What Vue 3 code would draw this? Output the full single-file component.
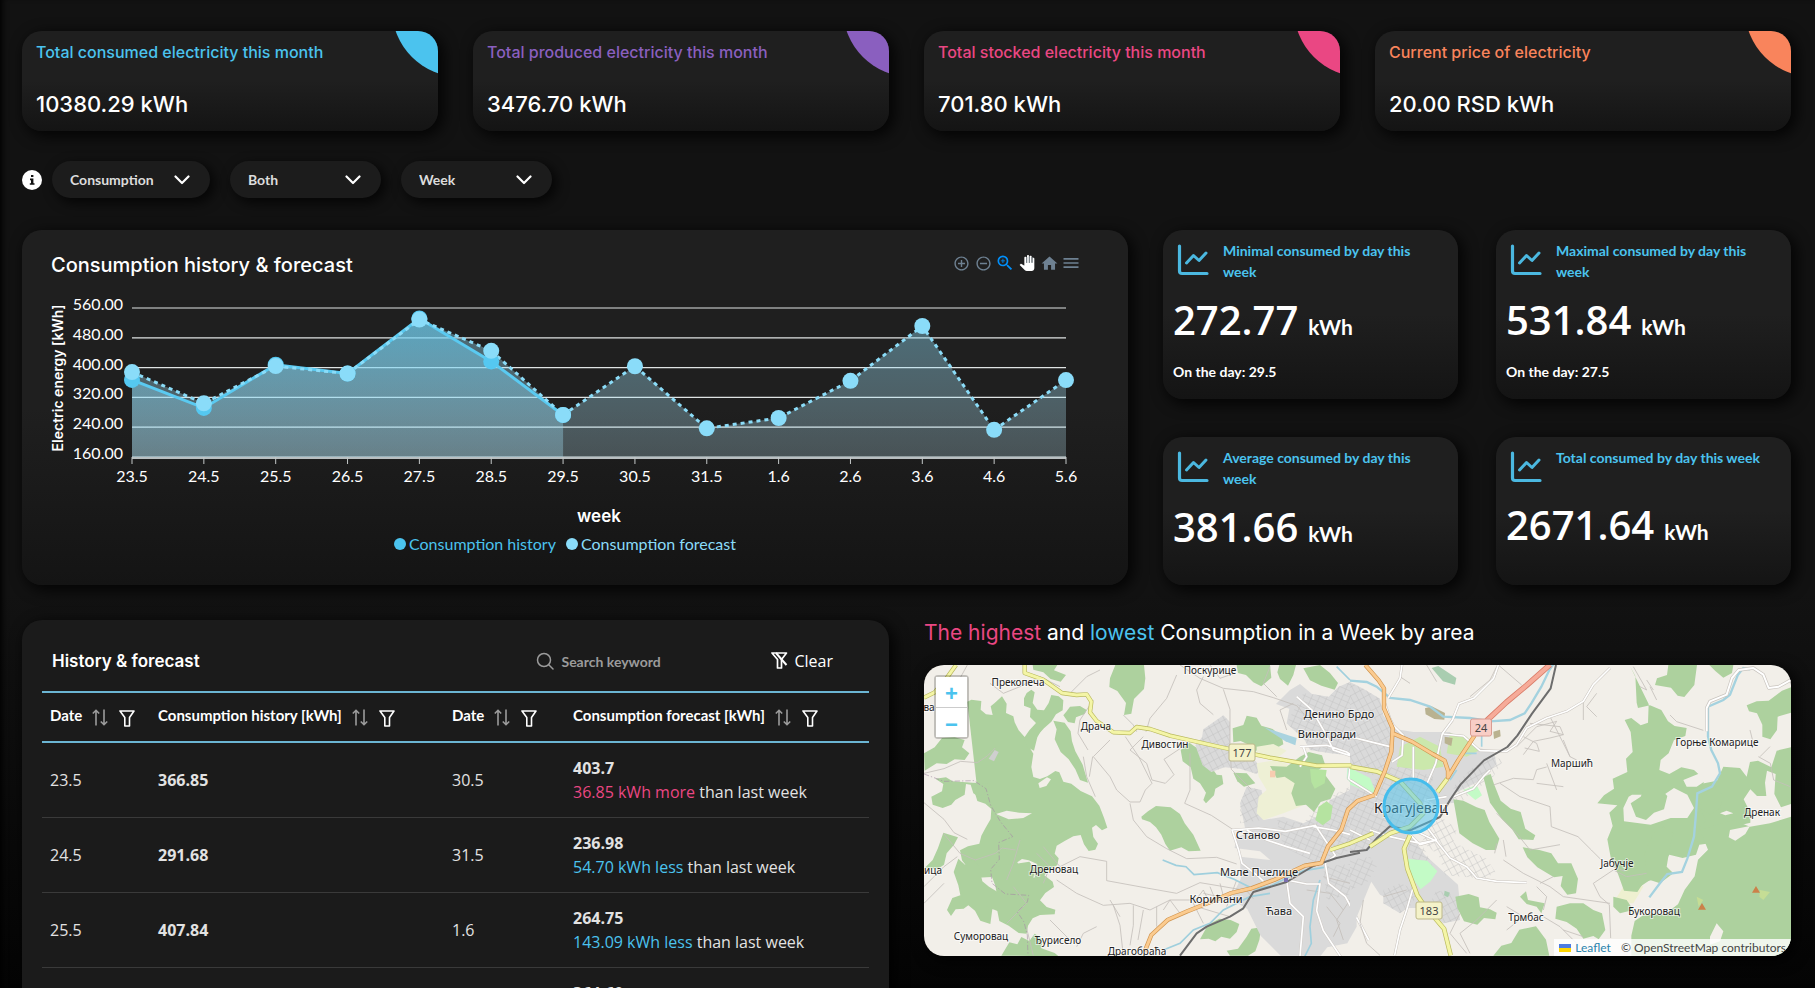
<script setup>
import { ref, computed } from 'vue'

const totals = [
  { label: 'Total consumed electricity this month', value: '10380.29 kWh', tone: 'blue' },
  { label: 'Total produced electricity this month', value: '3476.70 kWh', tone: 'purple' },
  { label: 'Total stocked electricity this month', value: '701.80 kWh', tone: 'pink' },
  { label: 'Current price of electricity', value: '20.00 RSD kWh', tone: 'orange' }
]

const filters = [
  { id: 'kind', label: 'Energy kind', options: ['Consumption', 'Production'], wide: true },
  { id: 'series', label: 'Series', options: ['Both', 'History', 'Forecast'] },
  { id: 'period', label: 'Period', options: ['Week', 'Month', 'Year'] }
]

const stats = [
  { label: 'Minimal consumed by day this week', value: '272.77', day: '29.5' },
  { label: 'Maximal consumed by day this week', value: '531.84', day: '27.5' },
  { label: 'Average consumed by day this week', value: '381.66' },
  { label: 'Total consumed by day this week', value: '2671.64' }
]

/* chart */
const days = ['23.5', '24.5', '25.5', '26.5', '27.5', '28.5', '29.5', '30.5', '31.5', '1.6', '2.6', '3.6', '4.6', '5.6']
const history = [366.85, 291.68, 407.84, 384, 531.84, 416.66, 272.77]
const forecast = [388, 304, 404, 384, 529, 445, 273, 403.7, 236.98, 264.75, 364.6, 511.6, 233, 366.4]
const ticks = [560, 480, 400, 320, 240, 160]
const left = 110
const right = 1044
const bottom = 167
const px = (i) => left + (i * (right - left)) / 13
const py = (v) => bottom - ((v - 160) * 149) / 400
const toPoints = (list) => list.map((v, i) => ({ x: px(i), y: py(v) }))
const historyPts = computed(() => toPoints(history))
const forecastPts = computed(() => toPoints(forecast))
const line = (pts) => pts.map((p) => `${p.x},${p.y}`).join(' ')
const area = (pts) => `${pts[0].x},${bottom} ${line(pts)} ${pts[pts.length - 1].x},${bottom}`

/* table */
const keyword = ref('')
const columns = ['Date', 'Consumption history [kWh]', 'Date', 'Consumption forecast [kWh]']
const rows = [
  { d1: '23.5', h: '366.85', d2: '30.5', f: '403.7', diff: '36.85 kWh more', up: true },
  { d1: '24.5', h: '291.68', d2: '31.5', f: '236.98', diff: '54.70 kWh less' },
  { d1: '25.5', h: '407.84', d2: '1.6', f: '264.75', diff: '143.09 kWh less' },
  { d1: '26.5', h: '384.00', d2: '2.6', f: '364.60', diff: '19.40 kWh less' }
]
const shown = computed(() => rows.filter((r) => Object.values(r).join(' ').includes(keyword.value)))

/* map */
const places = [
  { n: 'Прекопеча', x: 94, y: 21 },
  { n: 'Поскурице', x: 286, y: 9 },
  { n: 'ва', x: 5, y: 46 },
  { n: 'Драча', x: 172, y: 65 },
  { n: 'Дивостин', x: 241, y: 83 },
  { n: 'Денино Брдо', x: 415, y: 53, s: 11 },
  { n: 'Виногради', x: 403, y: 73, s: 11 },
  { n: 'Станово', x: 334, y: 174, s: 11 },
  { n: 'Мале Пчелице', x: 335, y: 211, s: 11 },
  { n: 'Корићани', x: 292, y: 238, s: 11 },
  { n: 'Ћава', x: 355, y: 250, s: 11 },
  { n: 'Дреновац', x: 130, y: 208 },
  { n: 'ица', x: 9, y: 209 },
  { n: 'Суморовац', x: 57, y: 275 },
  { n: 'Ђурисело', x: 134, y: 279 },
  { n: 'Драгобраћа', x: 213, y: 290 },
  { n: 'Маршић', x: 648, y: 102 },
  { n: 'Горње Комарице', x: 793, y: 81 },
  { n: 'Дренак', x: 838, y: 151 },
  { n: 'Јабучје', x: 693, y: 202 },
  { n: 'Трмбас', x: 602, y: 256 },
  { n: 'Букоровац', x: 730, y: 250 },
  { n: 'Крагујевац', x: 487, y: 148, s: 14 }
]
const shields = [
  { n: '177', x: 318, y: 79, w: 26, kind: 'secondary' },
  { n: '24', x: 557, y: 54, w: 21, kind: 'trunk' },
  { n: '183', x: 505, y: 237, w: 26, kind: 'secondary' }
]
</script>

<template>
  <main class="page">
    <section class="totals">
      <article v-for="t in totals" :key="t.label" class="card total" :class="t.tone">
        <h2>{{ t.label }}</h2>
        <p>{{ t.value }}</p>
      </article>
    </section>

    <section class="filters">
      <button class="info" type="button" aria-label="Information">
        <svg viewBox="0 0 20 20" width="20" height="20">
          <circle cx="10" cy="10" r="10" fill="#fff" />
          <path d="M9 5h2.400v2H9zM8 8.600h3.400v4.600h1.100v1.600H7.800v-1.600H9v-3H8z" fill="#111" />
        </svg>
      </button>
      <div v-for="f in filters" :key="f.id" class="pick" :class="{ wide: f.wide }">
        <select :id="f.id" :aria-label="f.label">
          <option v-for="o in f.options" :key="o">{{ o }}</option>
        </select>
        <svg viewBox="0 0 16 10" width="16" height="10">
          <path d="M1.500 1.500 8 8l6.500-6.500" fill="none" stroke="#fff" stroke-width="2.200" stroke-linecap="round" stroke-linejoin="round" />
        </svg>
      </div>
    </section>

    <section class="middle">
      <article class="card chart">
        <header>
          <h2>Consumption history &amp; forecast</h2>
          <div class="tools">
            <button type="button" aria-label="Zoom in">
              <svg viewBox="0 0 24 24" width="17" height="17" fill="#6e8192"><path d="M13 7h-2v4H7v2h4v4h2v-4h4v-2h-4V7zm-1-5C6.480 2 2 6.480 2 12s4.480 10 10 10 10-4.480 10-10S17.520 2 12 2zm0 18c-4.410 0-8-3.590-8-8s3.590-8 8-8 8 3.590 8 8-3.590 8-8 8z" /></svg>
            </button>
            <button type="button" aria-label="Zoom out">
              <svg viewBox="0 0 24 24" width="17" height="17" fill="#6e8192"><path d="M7 11v2h10v-2H7zm5-9C6.480 2 2 6.480 2 12s4.480 10 10 10 10-4.480 10-10S17.520 2 12 2zm0 18c-4.410 0-8-3.590-8-8s3.590-8 8-8 8 3.590 8 8-3.590 8-8 8z" /></svg>
            </button>
            <button type="button" aria-label="Selection zoom">
              <svg viewBox="0 0 24 24" width="20" height="20" fill="#008ffb"><path d="M15.500 14h-.79l-.28-.27A6.470 6.470 0 0 0 16 9.500 6.500 6.500 0 1 0 9.500 16c1.610 0 3.090-.59 4.230-1.570l.27.28v.79l5 4.990L20.490 19l-4.990-5zm-6 0C7.010 14 5 11.990 5 9.500S7.010 5 9.500 5 14 7.010 14 9.500 11.990 14 9.500 14z" /><path d="M12 10h-2v2H9v-2H7V9h2V7h1v2h2v1z" /></svg>
            </button>
            <button type="button" aria-label="Pan">
              <svg viewBox="0 0 24 24" width="16" height="16">
                <path d="M23 5.500V20c0 2.200-1.800 4-4 4h-7.300c-1.080 0-2.100-.43-2.850-1.190L1 14.830s1.260-1.230 1.300-1.250c.22-.19.49-.29.79-.29.22 0 .42.060.6.160.040.010 4.310 2.460 4.310 2.460V4c0-.83.67-1.500 1.500-1.500S11 3.170 11 4v7h1V1.500c0-.83.67-1.500 1.500-1.500S15 .67 15 1.500V11h1V2.500c0-.83.67-1.500 1.500-1.500s1.500.67 1.500 1.500V11h1V5.500c0-.83.67-1.500 1.500-1.500s1.500.67 1.500 1.500z" fill="#fff" />
                <path d="M11.500 3v9M15.500 2v10M19.500 3v9" stroke="#7d868c" stroke-width="1.800" />
              </svg>
            </button>
            <button type="button" aria-label="Reset zoom">
              <svg viewBox="0 0 24 24" width="19" height="19" fill="#6e8192"><path d="M10 20v-6h4v6h5v-8h3L12 3 2 12h3v8z" /></svg>
            </button>
            <button type="button" aria-label="Menu">
              <svg viewBox="0 0 24 24" width="20" height="20" fill="#6e8192"><path d="M3 18h18v-2H3v2zm0-5h18v-2H3v2zm0-7v2h18V6H3z" /></svg>
            </button>
          </div>
        </header>
        <svg class="plot" viewBox="0 0 1106 275" role="img" aria-label="Consumption history and forecast by day">
          <defs>
            <linearGradient id="fillHistory" x1="0" y1="0" x2="0" y2="1">
              <stop offset="0" stop-color="#4bc6f2" stop-opacity=".56" />
              <stop offset="1" stop-color="#a0dcf2" stop-opacity=".32" />
            </linearGradient>
            <linearGradient id="fillForecast" x1="0" y1="0" x2="0" y2="1">
              <stop offset="0" stop-color="#8bdcf8" stop-opacity=".42" />
              <stop offset="1" stop-color="#c5edfa" stop-opacity=".26" />
            </linearGradient>
          </defs>
          <g>
            <line v-for="t in ticks" :key="t" :x1="left" :x2="right" :y1="py(t)" :y2="py(t)" stroke="#dfe3e3" stroke-width="1.200" />
            <text v-for="t in ticks" :key="'t' + t" x="101" :y="py(t) + 2" text-anchor="end" class="axis">{{ t.toFixed(2) }}</text>
          </g>
          <polygon :points="area(historyPts)" fill="url(#fillHistory)" />
          <polygon :points="area(forecastPts)" fill="url(#fillForecast)" />
          <polyline :points="line(historyPts)" fill="none" stroke="#5acaf1" stroke-width="3" />
          <polyline :points="line(forecastPts)" fill="none" stroke="#8bdcf8" stroke-width="3" stroke-dasharray="4 4" />
          <line :x1="left" :x2="right" :y1="bottom + 1" :y2="bottom + 1" stroke="#b9bfc1" stroke-width="2" />
          <g v-for="(d, i) in days" :key="d">
            <line :x1="px(i)" :x2="px(i)" :y1="bottom" :y2="bottom + 7" stroke="#c4c8c8" />
            <text :x="px(i)" y="192" text-anchor="middle" class="axis">{{ d }}</text>
          </g>
          <circle v-for="(p, i) in historyPts" :key="'h' + i" :cx="p.x" :cy="p.y" r="8" fill="#55c8f1" />
          <circle v-for="(p, i) in forecastPts" :key="'f' + i" :cx="p.x" :cy="p.y" r="8" fill="#8adcf9" />
          <text x="-88" y="41" transform="rotate(-90)" text-anchor="middle" class="ytitle">Electric energy [kWh]</text>
          <text x="577" y="232" text-anchor="middle" class="xtitle">week</text>
          <circle cx="378" cy="254" r="6" fill="#4bc3ee" />
          <text x="387" y="260" class="axis" fill="#4bc3ee">Consumption history</text>
          <circle cx="550" cy="254" r="6" fill="#8adcf9" />
          <text x="559" y="260" class="axis" fill="#8adcf9">Consumption forecast</text>
        </svg>
      </article>

      <div class="stats">
        <article v-for="s in stats" :key="s.label" class="card stat">
          <header>
            <svg viewBox="0 0 40 40" width="40" height="40" fill="none" stroke="#4bb8e0" stroke-linecap="round" stroke-linejoin="round">
              <path d="M6.500 6v25q0 2.500 2.500 2.500h25" stroke-width="3.200" />
              <path d="M13.500 23l7-7.500 5.500 5 7-7.500" stroke-width="3" />
            </svg>
            <h3>{{ s.label }}</h3>
          </header>
          <p class="figure"><strong>{{ s.value }}</strong><span>kWh</span></p>
          <p v-if="s.day" class="day">On the day: {{ s.day }}</p>
        </article>
      </div>
    </section>

    <section class="lower">
      <article class="card listing">
        <header>
          <h2>History &amp; forecast</h2>
          <label class="search" for="keyword">
            <svg viewBox="0 0 18 18" width="18" height="18" fill="none" stroke="#9b9b9b" stroke-width="1.500" stroke-linecap="round"><circle cx="8" cy="8" r="6.500" /><path d="M13 13l4 4" /></svg>
            <input id="keyword" v-model="keyword" type="text" placeholder="Search keyword" aria-label="Search keyword" />
          </label>
          <button type="button" class="clear" @click="keyword = ''">
            <svg viewBox="0 0 17 17" width="17" height="17" fill="none" stroke="#fff" stroke-width="1.700" stroke-linejoin="round"><path d="M1 1h14.500l-5 6.500V16H6.500V7.500z" /><path d="M5 1l10.500 12" stroke-width="2" /></svg>
            Clear
          </button>
        </header>
        <table>
          <thead>
            <tr>
              <th v-for="(c, i) in columns" :key="i" scope="col">
                <div>
                  <span>{{ c }}</span>
                  <button type="button" :aria-label="'Sort by ' + c">
                    <svg viewBox="0 0 16 17" width="16" height="17" fill="none" stroke="#9c9c9c" stroke-width="1.600"><path d="M4 16.500V1.500M.8 4.500 4 1.300l3.200 3.200M12 .5v15M8.800 12.500l3.200 3.200 3.200-3.200" /></svg>
                  </button>
                  <button type="button" class="funnel" :aria-label="'Filter ' + c">
                    <svg viewBox="0 0 16 17" width="16" height="17" fill="none" stroke="#fff" stroke-width="1.600" stroke-linejoin="round"><path d="M1 1h14l-4.500 6.500V16H5.800V7.500z" /></svg>
                  </button>
                </div>
              </th>
            </tr>
          </thead>
          <tbody>
            <tr v-for="r in shown" :key="r.d1">
              <td>{{ r.d1 }}</td>
              <td><b>{{ r.h }}</b></td>
              <td>{{ r.d2 }}</td>
              <td>
                <b>{{ r.f }}</b><br />
                <span :class="r.up ? 'more' : 'less'">{{ r.diff }}</span> than last week
              </td>
            </tr>
          </tbody>
        </table>
      </article>

      <article class="area">
        <h2><span class="more">The highest</span> and <span class="less">lowest</span> Consumption in a Week by area</h2>
        <div class="map">
          <svg class="tiles" viewBox="0 0 867 291" preserveAspectRatio="xMidYMid slice" role="img" aria-label="Map of Kragujevac">
            <defs>
              <pattern id="streets" width="21" height="17" patternUnits="userSpaceOnUse" patternTransform="rotate(24)">
                <path d="M0 .5h21M.5 0v17" stroke="#c2c2c2" stroke-width="2" fill="none" />
              </pattern>
              <pattern id="blocks" width="17" height="23" patternUnits="userSpaceOnUse" patternTransform="rotate(-28)">
                <path d="M0 .5h17M.5 0v23" stroke="#c2c2c2" stroke-width="2" fill="none" />
              </pattern>
            </defs>
            <rect width="867" height="291" fill="#f2efe9" />

            <g transform="translate(-14 -65) scale(.33333)">
              <g fill="#add19e">
                <path d="M172 305l12-6 30 4-2 26 16 14 20 2-6-26 12-10 22-20 14 22-2 28 22 10 4 18 12 24 18 20 14-20 20-22-18-18 2-26-20-8v-22l8-16 14-10 10 8-6 32 14 20 20 2 14-22 8-24 22 4 14 12-2 30-20 12-14 22-22 20-22 24-14 10-8 22 12 20-6 40 6 30 20 6 22-8 24-16 12 4 12 28 24 6 28 22 34 16 22 28 14 36 10 30-16 8-18-16-12 8 4 28 14 20-8 18-20 4-14-20-10-28-22 4-26 14-24 14-6 24 12 14-4 20-30 20-16 20-12 16-10-24 6-36-24-10-20-4-14 10 12 26-4 26-14 8-22-10-14-36-22 6-14 24-40 2-26-24-22-28-6-30 24-12 34-8 6-24 12-22 16-28 2-30-18-16-24-8-8-26 6-24z" />
                <path d="M342 420l50-62 20 2-30 52-10 40-20-10zM430 362l34 6 18 26 4 30 10 30 22 40 10 34 6 20-24-8-14-32-20-30-24-22-18-38 6-30z" />
                <path d="M480 320l30-2 20 12-6 12-26 10-4 18-20-4-14-20 10-12z" />
                <path d="M42 460l32-18 22-28 38-2 30 8-8 22 22 18-14 20-30-2-24 14-30-2-36 22z" />
                <path d="M64 590l32-16 4-22-24-16 32-4 20 12 60 4 50 2-4 22-28 18-16-10-8-26-14-2-4 32-28 16-12 14-26 10-30-10z" />
                <path d="M100 698l44 14-12 22-22 26-8 34-20 14-38-4 24-24 16-36z" />
                <path d="M145 776l20 18 24-16 16 16 12 50 20 16 30 18 12 40-10 8-22 2-6 44-30-10-16-30-20-16-14 10-24 2-14 20-12-18 16-36 24-8-6-30-14-40z" />
                <path d="M240 815l34-20 44-4 40-6 18 22-6 26 32-8 26 20 4 16-26 18-16 22 20 20 26 8-2 14-44 2-22 10-14 22-4 24-24-2-30-22-28-14-6-30-34-14 6-26 26-14-4-22z" />
                <path d="M274 1067l24-40 24 6 12-22 24 12 16-22 24 16-4 28 40 14 12 10z" />
                <path d="M368 195h74l-10 16 36 14-16 20-30-8-22-20-30-8z" />
                <path d="M616 195h86l4 40-4 32-30 30-8 44-22 4 6-36-26-36-24-12 2-26z" />
                <path d="M980 195h100l4 38-30 26-24-12-22-22-24-6zM1108 195h50l-8 30-16 32-24-20-8-20zM1180 205l50-10 30 24 24 30-10 20-40-12-34-16z" />
                <path d="M968 385l32-10 10-28 30 6 14 24 34 10 28 24 4 22-26 14-24-8-24 6-16 18-12-28-26-12-22 4z" />
                <path d="M812 450l26-22 28 20 22 22-2 24 20 10 14 20 16 2 4 26-24 14-4 20-24 24-8-10 8-22-18-28-20-14-8-34-24-18z" />
                <path d="M970 518l40 2 26 30-34 10-20-16z" />
                <path d="M694 650l20-16 24-16 44 4 28 20 14 28 26 34 22 48-36 2-22-12-34 10-14-20-12-28-16-22-18-16-24-8z" />
                <path d="M870 1018l24-44 34-18 34 4 26 12-8 24-20 20-26-6-18 14-20-8zM950 1052l34-6 26-36 14-24 30-4-6 38-12 34-22 13h-54zM1064 976l26-22 18 22-6 20-22 8-18-12z" />
              </g>
              <path d="M258 642l32-10 38 6 38 2-26 14-44 4zM385 550l26-18 12 6-14 20-20 6z" fill="#f2efe9" />
              <path d="M236 476l18-26 12 6-14 28z" fill="#cfcfcf" />
              <g fill="#dadada">
                <path d="M880 388l60-42 20 20v80l30 20 46 16 20 26-16 14-50-16-46-4-40 14-26-20-22-60 20-24z" />
                <path d="M1140 270l30-18 36 30 50 8 30-30 34-14v220l-60-6-60-10-16-30-54-50 8-44-40-14z" />
                <path d="M990 610l20-50 44 10 10 40-4 50 60-10 60 20 60-30 20-40 60-30v220l-40 20-60 20-100-16-70-60-76-10 4-26 30-20z" />
                <path d="M990 770l90 10 80 30 60-20 120-10v200l-28 50 -60 12-20 25h-120l-60-60-40-80-50-30 30-60z" />
              </g>
              <path d="M880 388l60-42 20 20v80l30 20 46 16 20 26-16 14-50-16-46-4-40 14-26-20-22-60 20-24zM990 610l20-50 44 10 10 40-4 50-70 10z" fill="url(#blocks)" />
              <path d="M1180 280l26 2 50 8 30-30 34-14v220l-60-6-60-10-16-30-54-50zM1100 660l80 10 40-50 60-40 40-20v190l-40 20-60 20-100-50zM1240 800l100-10v90l-90 20z" fill="url(#streets)" />
              <path d="M1040 490l60-10 50 20 40 60 20 40-40 20-50 20-60 20-20-20 6-50 24-20-24-40zM1040 440l50-8 40 20-40 30-50-14z" fill="#eef0d5" />
              <path d="M1080 498l50 2 40-30 26-14 40 10 10 30-30 20 30 10 30 40-14 30-30 10-20 30-24-22-30 4-14-38 10-30-30-20-24 4z" fill="#add19e" />
              <path d="M1216 660l10-40 24-16 18 14-6 40-24 18zM1200 506l50 4-6 40-30 16-10-20z" fill="#b5e3a0" />
              <path d="M1312 504l28 8v54l-30-30z" fill="#c3f5d2" />
              <path d="M1080 512h16v20h-16z" fill="#f7ccb0" />
              <path d="M1062 382l98 32-4 22-30-12z" fill="#aad3df" />
              <g fill="none" stroke="#c4bfba" stroke-width="2.500">
                <path d="M172 195l-22 40-50 40M42 520l60-14 50-22 50 4 30-20 24-24M42 608l60 50 30 40 40 20M100 700l50 60 46 20 60-20 20-16 40 6M42 860l60-60 40-30M42 910l60-60" />
                <path d="M810 195l60 40 70 30 90 10 60 18 70 24 40 46M880 230l-20 40 10 40 40 34M940 268l20 60 0 120 4 60 60 60M800 225l-30 70-50 60-12 40M640 345l30 30 10 20M600 420l-50 50 50 60 20 40 40 36h30l16-36 20-20-40-80-40-60M550 300l-40 60-6 40 30 50M520 470l10 60 26 60M548 470l-10 60M700 410l-40 40 50 40 16 50 40 10 26-26-30-46 60-40M840 460v110l-16 40 80 36 70 46M660 610l10 50 40 50 60 36 60 30 90-4 60 20" />
                <path d="M400 740l50 60 60-30 80 14v58l120 22 90 16 70-32 60 10 80 14 20 24M440 840l60 40 80 36 80-6 60 20 60-30 80 0M610 916l20 60 10 92M670 916v60l-10 60M700 930l-16 90M740 920v60M380 760l40 40-20 50M330 720l-20 70-20 50M310 860l40 50-60 60M350 985l20 82M420 960l60 60M500 1040l20-40 40-20M880 970l-30-60 30-40 20 40M600 900l30 50M760 930l20-30 30 40M480 280l50-50 40-20M450 260l-60-30-60 30-50 20-40-30" />
                <path d="M900 860l20 50M930 850l16 60M880 880l90 20M860 920l100 30M980 840l-30 80M900 195l30 40 40-14M1100 290l-40-40 20-50M1130 390l-20-60 40-20M1250 920l40 50-20 40M1320 900l-40 60 20 60M1190 870l70 10 40 50M1240 830l80 20" />
              </g>
              <path d="M42 522l60 22 90-2 36 24 14 50 30 50 36 44-42 18 2 50-26 30 4 42 40 32 70 4-4 20-30 30 20 30 10 40 2 60" fill="none" stroke="#a58ba5" stroke-width="3" stroke-dasharray="16 6 4 6" opacity=".6" />
              <path d="M758 780l40 16 30 4 24 24 70-6 50 20 60 30 50-10 60-30 40-16 60-10M760 1050l50-20 40-40 50-20 40-40 80-40 60-10M1230 840l-20 60-10 80 4 50-20 40M1280 200l40 40" fill="none" stroke="#9fcfdd" stroke-width="5" />
              <path d="M1160 290l46 40 40 70 24 50 60 20M1180 440l10 30-20 30M1170 440l80-4 60 20 40 26-30 24-4 30 40 26M966 690l80-6 80 10 90-18 60 90-30 24 10 60 50 40 70 130M966 690l20 60 10 40 50 40 20 20M1130 840l10 70 40 40-10 118M1130 840l60 12h40l-10 80 20 60 60 90M1210 680l60 10 60 16M1200 760l-70-20-60-20-60-30" fill="none" stroke="#cfcac5" stroke-width="8" />
              <path d="M1160 290l46 40 40 70 24 50 60 20M1180 440l10 30-20 30M1170 440l80-4 60 20 40 26-30 24-4 30 40 26M966 690l80-6 80 10 90-18 60 90-30 24 10 60 50 40 70 130M966 690l20 60 10 40 50 40 20 20M1130 840l10 70 40 40-10 118M1130 840l60 12h40l-10 80 20 60 60 90M1210 680l60 10 60 16M1200 760l-70-20-60-20-60-30" fill="none" stroke="#fff" stroke-width="5" />
            </g>

            <g transform="translate(426 -65) scale(.33333)">
              <g fill="#dadada">
                <path d="M0 246l40 20 50 30 10 50 30 40 60 10 110 0 40 40 90 16 10 40-50 50-80 40 4 26-60 6-30-20-10 50-30 60 40 60 100 90 6 60-60 10-100 0-80-40-40-60-20-20H0z" />
                <path d="M100 870l50-20 50 20-10 40-40 30-50-30zM260 870l60 20 10 70-50 10-50-40z" />
                <path d="M0 660l70-10 60 20 30 40-20 60-30 40-40 20L0 1000z" />
              </g>
              <path d="M0 246l40 20 50 30 10 50 30 40 0 100-60 40-70-20zM310 560l60-60 60-30 30 10-30 50-80 60-30 30zM240 670l40-14 40 30-10 40 100 50 26 40-30 20-120-10-20-60-50-40zM100 870l50-20 50 20-10 40-40 30-50-30zM260 870l60 20 10 70-50 10-50-40z" fill="url(#blocks)" />
              <path d="M0 580l60-30 80-60 110 40-10 100 -40 30-60 20-60 20-20 40-60 20zM160 720l60 20 30 60-30 40M0 780l60-10 20 30-30 50-50 20z" fill="url(#streets)" />
              <path d="M150 440l60-30 60 30 10 60-60 10-80-10zM300 400l50 10 40 40-40 20-60-10z" fill="#cbe8ac" />
              <path d="M0 504l60 30 20 50-80-30zM340 570l40-14 16 30-20 14zM172 776l60 6 30 32-20 30-30 24-30-40z" fill="#c3fbc6" />
              <path d="M225 325l20-6 40 20-2 20-30-2-26-14zM284 410l24 4-4 24-20-8zM430 395l20-6 2 20-20 8z" fill="#b9b290" />
              <path d="M245 204l20-6 54 36-4 20-36-10zM284 872l16 6-6 14-12-6z" fill="#a9cdb0" />
              <path d="M820 860l40-20 20 20-30 50-60-2zM940 670l60-20 30 30-60 20z" fill="#eef0d0" />
              <g fill="#add19e">
                <path d="M840 198l16 30 4 80 4 16 36-8 34 14 20 34 20 14 36 6-4 24-34 12-16 40-24 20-4 30 30 12 36-20 38 8 30 28-4 34 40-4 34 14-28 30-14 34 20 60-30 24-32 4-10 30-40 10-40-10-20 30-10 40-46 12-20 30-40-4-18-50-22-50-10-54 16-40-10-40 24-22-60-6 20-24 30-20-4-30 44-20-4-40 20-20-6-60-18-36 20-6 28 22 22-8 2-56z" />
                <path d="M955 195h86l-8 60-30 36-20-4-20-24-48-8 6-20 30-10z" />
                <path d="M1078 195h72l-4 24-26 14-24-20z" />
                <path d="M1190 316l30-12 36-2 40-30 27-10v76l-40 12-2 40-20 28-24-8 0-36-16-34-24-6z" />
                <path d="M1120 500l50 4 20 26 10-44 24-4 40 20 16-50 43-10v170l-30 10-20-40 4-60-26-10-6 36 4 40-28 0-20-20-20 30 20 40 0 30-40 10-30-12-36 36-16 30-40-10 10-40 20-20-24-40 6-70 50-10z" />
                <path d="M1050 690l50-16 50-14 50 20 60-10 63-20v417H844v-60l10-44 30-20 60 0 40-30 20-44 30-40 10-50 30-30z" />
                <path d="M1060 580l40-20 20 30-10 34-30 20-30-20zM910 700l30-20 30 20-10 40-10 60 20 20-40 30-30-10-30 20-10-20 30-20-6-60z" />
                <path d="M400 530l22-8 10 30 20 50 30 24 30 10 14 50 30 20-6 14-44-2-20-30-30-30-36-50z" />
                <path d="M310 598l30 4 40 20 24 8 14 36 30 50-10 34-30 0-40-20-40-30z" />
                <path d="M518 742l50 8 36 10 20 30 40 0 20 46-6 44-26 4-20-26 6-30-26 4-50-30-30-30z" />
                <path d="M316 890l40-8 30 10 4 30 30 6 20 10-4 20-34-4-20 20-40-10-20-40zM510 890l18-16 6 26 50 10-10 30-14-20-30-8z" />
                <path d="M620 920l40-10 40 0 30 20 26 10 10 50-20 28-16-10-30 8-20-30-30-20-34-10z" />
                <path d="M430 1067l24-30 30-8 24-40 50-10 30 40 10 48z" />
                <path d="M790 890l40 10 20 30-40 10-20-20z" />
              </g>
              <path d="M836 590l10-6 50 0 46 0 30-20 40 20 20 40-20 30-50 0-60 20-80-10-2-40z" fill="#f2efe9" />
              <path d="M842 610l30-20 10-22 50 0 20 20-10 40-30 10-24 22-30-10z" fill="#add19e" />
              <path d="M1000 540l50-20 20 20-30 20-30 0zM1110 640l20-8 20 8-24 6zM1080 1010l20-40 20 24-10 30-30 10zM1140 690l60-12-14 24-30 20-20-10z" fill="#f2efe9" />
              <path d="M1040 890l20 10-14 20zM1230 870l30 6-20 24-12-10z" fill="#c5dd95" />
              <g fill="none" stroke="#c4bfba" stroke-width="2.500">
                <path d="M150 230l30 20M230 195l30 50M440 200l-20 40-60 50M445 195l70 60M500 440l60-60 60-16-20 30 40 10-40 10-50 10-30 40M540 370l90 10 10 24M520 410l40 20 8 24-44-10M600 350l60 120 20 10M640 420l20 50M430 555l60-20 60 4 10-30 30-8M450 550l60 40 90 30 4 60 80 30 40 40 40 40 60 24M560 550l80 10M590 490l30 80M440 640l60 60 40 50 90-16M440 730l-6 30M460 720l8 50" />
                <path d="M460 780l60 40 80 40 40 30 140 20M560 860l30 30-10 40M730 850l60-40 40 20 60-10M730 850l20 40 28 24 4 100M610 830l-40 20M440 900l-60 60-50 40 30 60M330 940l-30 60 50 60M470 920l50 30-50 40M580 950l50 30 60 60M640 990l60 20M850 200l40 70-20-10M890 240l20 30M960 345l20 20 80 26M1225 470l36 20 10 50 50 20M1260 440l-30 30M1200 390l10 40M920 300l-20-40M740 280l-30 40 30 30M700 300v60M40 900l-10 70 20 60 40 36M100 890l70-20" />
              </g>
              <g fill="none" stroke="#a4d2df" stroke-width="7">
                <path d="M0 242l50 4 30 14 40 34 60 6 60 20 40 30 80 4 60 10 60-4 44-20 20-30 30-50 24-50 14-20" />
                <path d="M395 440v-60M340 460l40 0M300 540l20-30M50 750l60-60" stroke-width="5" />
                <path d="M1200 208l-20-4-16 20-24 60-20 16-46 20v90l10 40 20 40 6 30-24 40-44 20-4 60-6 70-20 66-16 40-44 6-24 30-30 40" />
              </g>
              <g fill="none" stroke-linejoin="round">
                <path d="M156 195l-6 40-36 60M445 195l-14 40-60 60-44 16-20 50-30 40-20 90-26 60M100 296l20 60 10 20 30 30-4 60-30 20M0 410l120 30M190 440v100M280 402l60 6 50 44 80 2 30-20 30-50 60-30 60-20 50-30 30-50 50-50M310 590l60-24 30-36 20-20M0 540l80 50M0 690l60 30M60 690l60 20 90 20 50-10M190 690l70 34 40 50 50 26 30 34 60 10 90 4M190 860l-20 70-20 60-16 76M230 600l60-10M230 680l30 40-50 14-30-30" stroke="#c9c4be" stroke-width="8" />
                <path d="M156 195l-6 40-36 60M445 195l-14 40-60 60-44 16-20 50-30 40-20 90-26 60M100 296l20 60 10 20 30 30-4 60-30 20M0 410l120 30M190 440v100M280 402l60 6 50 44 80 2 30-20 30-50 60-30 60-20 50-30 30-50 50-50M310 590l60-24 30-36 20-20M0 540l80 50M0 690l60 30M60 690l60 20 90 20 50-10M190 690l70 34 40 50 50 26 30 34 60 10 90 4M190 860l-20 70-20 60-16 76M230 600l60-10M230 680l30 40-50 14-30-30" stroke="#fff" stroke-width="5" />
                <path d="M1070 394v-70l10-20 50-20 16-50 20-24 44-6 30 20 16 40 30-4 36-20" stroke="#c9c4be" stroke-width="10" />
                <path d="M1070 394v-70l10-20 50-20 16-50 20-24 44-6 30 20 16 40 30-4 36-20" stroke="#fff" stroke-width="6" />
                <path d="M618 195l-16 70-56 76-44 66-30 34-70 40-70 72-30 44-32 54-90 40-60-12-40 36-30 35-50 6" stroke="#6d6d6d" stroke-width="6" />
                <path d="M60 740l60-40 60-20 40-40-10-30-60-66-70-30-80-14M180 706l-18 40 10 60 30 80 20 30 60 70 20 80M262 576l30-40" stroke="#b9b95e" stroke-width="14" />
                <path d="M60 740l60-40 60-20 40-40-10-30-60-66-70-30-80-14M180 706l-18 40 10 60 30 80 20 30 60 70 20 80M262 576l30-40" stroke="#f4f5a6" stroke-width="10" />
                <path d="M46 195l40 46 16 24v60l26 60-4 70-20 60-30 70M128 400l60 26 60 36 36 20 10 30v20l30-50 50-76" stroke="#d0944e" stroke-width="13" />
                <path d="M46 195l40 46 16 24v60l26 60-4 70-20 60-30 70M128 400l60 26 60 36 36 20 10 30v20l30-50 50-76" stroke="#fbcb8f" stroke-width="9" />
                <path d="M410 362l60-56 60-50 70-62" stroke="#d97c68" stroke-width="17" />
                <path d="M410 362l60-56 60-50 70-62" stroke="#f6ab99" stroke-width="12" />
              </g>
              <path d="M1206 878l12-20 12 20zM1044 929l12-20 12 20z" fill="#cb8149" />
            </g>

            <!-- main roads and railway crossing both halves of the town -->
            <g transform="translate(-14 -65) scale(.33333)" fill="none" stroke-linejoin="round">
              <path d="M810 1067L860 1000 890 980 960 950 1000 925 1030 876 1130 846 1210 798 1280 774 1350 758" stroke="#6d6d6d" stroke-width="6" />
              <path d="M344 195v24l56 20 56 40 44 6 30-2 14 22-4 32 20 26 50 34 50 2 20-18 40 6 60 20 150 34 150 32 140 24 104-1M138 195l-30 42-34 40-32 16M1260 750l60-20 70-30" stroke="#b9b95e" stroke-width="13" />
              <path d="M344 195v24l56 20 56 40 44 6 30-2 14 22-4 32 20 26 50 34 50 2 20-18 40 6 60 20 150 34 150 32 140 24 104-1M138 195l-30 42-34 40-32 16M1260 750l60-20 70-30" stroke="#f4f5a6" stroke-width="9" />
              <path d="M704 1055l20-50 50-46 60-26 60-24 70-30 60-14 70-26 90-42 50-8 20-50 40-50 20-60 28-26 52-18" stroke="#d0944e" stroke-width="13" />
              <path d="M704 1055l20-50 50-46 60-26 60-24 70-30 60-14 70-26 90-42 50-8 20-50 40-50 20-60 28-26 52-18" stroke="#fbcb8f" stroke-width="9" />
              <path d="M1122 834h12v12h-12z" fill="#7b6fb0" />
            </g>

            <g v-for="s in shields" :key="s.n" :class="['shield', s.kind]">
              <rect :x="s.x - s.w / 2" :y="s.y" :width="s.w" height="17" rx="2" />
              <text :x="s.x" :y="s.y + 13" text-anchor="middle">{{ s.n }}</text>
            </g>
            <text v-for="p in places" :key="p.n" :x="p.x" :y="p.y" :font-size="p.s || 10" text-anchor="middle" class="place">{{ p.n }}</text>
            <circle cx="487" cy="141" r="27" fill="#4bc3ee" fill-opacity=".5" stroke="#45bdec" stroke-width="3" />
          </svg>
          <div class="zoom">
            <button type="button" aria-label="Zoom map in">+</button>
            <button type="button" aria-label="Zoom map out">−</button>
          </div>
          <div class="credit">
            <a href="#leaflet"><svg viewBox="0 0 12 8" width="12" height="8"><path fill="#4c7be1" d="M0 0h12v4H0z" /><path fill="#ffd500" d="M0 4h12v4H0z" /></svg> Leaflet</a>
            <span>© OpenStreetMap contributors</span>
          </div>
        </div>
      </article>
    </section>
  </main>
</template>

<style>
body {
  background: #050505;
}
</style>

<style scoped>
.page {
  box-sizing: border-box;
  height: 100vh;
  overflow: hidden;
  padding: 31px 24px 0 22px;
  background: linear-gradient(#121212 60%, #040404);
  box-shadow: inset 6px 0 6px -4px #000;
  color: #fff;
  font-family: "Open Sans", "Noto Sans", sans-serif;
  font-size: 16px;
}
h2, h3, p { margin: 0; }
button {
  padding: 0;
  border: 0;
  background: none;
  color: inherit;
  font: inherit;
  cursor: pointer;
}
svg { display: block; }
.card {
  border-radius: 20px;
  background: linear-gradient(#1f1f1f 50%, #141414);
  box-shadow: 4px 4px 14px 2px rgba(0, 0, 0, .75);
}
.more { color: #ea4783; }
.less { color: #4bc3ee; }

.totals {
  display: grid;
  grid-template-columns: repeat(4, 1fr);
  gap: 35px;
}
.total {
  position: relative;
  overflow: hidden;
  padding: 10px 14px 13px;
}
.total::after {
  content: "";
  position: absolute;
  top: -90px;
  right: -90px;
  width: 136px;
  height: 136px;
  border-radius: 50%;
  background: currentColor;
}
.total h2 {
  font: 500 16px/22px Inter, sans-serif;
}
.total p {
  margin-top: 27px;
  color: #fff;
  font: 500 22px/28px Inter, sans-serif;
}
.blue { color: #4bc3ee; }
.purple { color: #8a5fbf; }
.pink { color: #ea4783; }
.orange { color: #f9845c; }

.filters {
  display: flex;
  align-items: center;
  margin-top: 30px;
  gap: 20px;
}
.info { margin-right: -10px; }
.pick {
  position: relative;
  width: 151px;
}
.pick.wide { width: 158px; }
.pick select {
  appearance: none;
  width: 100%;
  height: 37px;
  padding: 0 18px;
  border: 0;
  border-radius: 19px;
  background: #1c1c1c;
  box-shadow: 4px 4px 12px 1px rgba(0, 0, 0, .7);
  color: #dcdcdc;
  font: 700 14px/20px Lato, sans-serif;
}
.pick svg {
  position: absolute;
  top: 14px;
  right: 20px;
  pointer-events: none;
}

.middle {
  display: grid;
  grid-template-columns: 1106fr 628fr;
  gap: 35px;
  margin-top: 32px;
}
.chart header {
  display: flex;
  align-items: center;
  justify-content: space-between;
  height: 60px;
  padding: 0 47px 0 29px;
}
.chart h2 {
  margin-top: 10px;
  font: 500 20px/24px Inter, sans-serif;
}
.tools {
  display: flex;
  align-items: center;
  gap: 2px;
  margin-top: 6px;
}
.tools button {
  display: grid;
  place-items: center;
  width: 20px;
  height: 20px;
}
.plot {
  width: 100%;
  height: auto;
  margin-bottom: 20px;
}
.axis {
  font: 400 16px Lato, sans-serif;
}
.axis:not([fill]), .ytitle, .xtitle { fill: #fff; }
.ytitle { font: 600 14px Inter, sans-serif; }
.xtitle { font: 600 17px Inter, sans-serif; }

.stats {
  display: grid;
  grid-template-columns: 1fr 1fr;
  grid-template-rows: 169fr 148fr;
  gap: 38px;
}
.stat { padding: 10px 20px 10px 10px; }
.stat header {
  display: flex;
  gap: 10px;
}
.stat header svg { flex: none; }
.stat h3 {
  color: #4bc3ee;
  font: 700 14px/21px Lato, sans-serif;
}
.figure {
  display: flex;
  align-items: baseline;
  gap: 10px;
  margin-top: 8px;
  line-height: 60px;
}
.figure strong {
  font-size: 40px;
  font-weight: 600;
}
.figure span {
  font: 700 21px Lato, sans-serif;
}
.day {
  margin-top: 11px;
  font: 700 14px/21px Lato, sans-serif;
}

.lower {
  display: grid;
  grid-template-columns: 1fr 1fr;
  align-items: start;
  gap: 35px;
  margin-top: 35px;
}
.listing {
  padding: 0 20px 20px;
  background: #1b1b1b;
}
.listing header {
  display: flex;
  align-items: center;
  box-sizing: border-box;
  height: 71px;
  padding: 10px 36px 0 10px;
}
.listing h2 {
  font: 600 17px/24px Inter, sans-serif;
}
.search {
  display: flex;
  align-items: center;
  gap: 7px;
  margin-left: auto;
}
.search input {
  width: 210px;
  padding: 2px 0 0;
  border: 0;
  outline: 0;
  background: none;
  color: #ddd;
  font: 700 14px/20px Lato, sans-serif;
}
.search input::placeholder { color: #9b9b9b; opacity: 1; }
.clear {
  display: flex;
  align-items: center;
  gap: 6px;
}
table {
  width: 100%;
  border-collapse: collapse;
  table-layout: fixed;
}
th, td { box-sizing: border-box; }
th:nth-child(1) { width: 108px; }
th:nth-child(2) { width: 294px; }
th:nth-child(3) { width: 121px; }
th {
  padding: 0 8px;
  border-top: 2px solid #6bb5d3;
  border-bottom: 2px solid #6bb5d3;
  text-align: left;
}
th div {
  display: flex;
  align-items: center;
  height: 48px;
  font: 700 15px/24px Lato, sans-serif;
  white-space: nowrap;
}
th span { margin: 0 10px 4px 0; }
th .funnel { margin: 2px 0 0 11px; }
td {
  padding: 13px 8px;
  border-bottom: 1px solid #3a3a3a;
  color: #e2e2e2;
  line-height: 24px;
}
td b { font-weight: 700; }

.area h2 {
  font: 400 21px/26px Inter, sans-serif;
}
.map {
  position: relative;
  overflow: hidden;
  margin-top: 19px;
  border-radius: 20px;
  box-shadow: 4px 4px 14px 2px rgba(0, 0, 0, .75);
}
.tiles {
  width: 100%;
  height: auto;
}
.place {
  fill: #222;
  stroke: #fff;
  stroke-opacity: .6;
  stroke-width: 2px;
  paint-order: stroke;
  font-family: "Noto Sans", sans-serif;
}
.shield text {
  fill: #444;
  font: 11px "Noto Sans", sans-serif;
}
.secondary rect { fill: #f4f2c9; stroke: #bdb88a; }
.trunk rect { fill: #f8cdc5; stroke: #d99c92; }
.zoom {
  position: absolute;
  top: 10px;
  left: 10px;
  display: grid;
  border: 2px solid rgba(0, 0, 0, .2);
  border-radius: 4px;
  background-clip: padding-box;
}
.zoom button {
  box-sizing: border-box;
  width: 31px;
  height: 30px;
  padding-top: 4px;
  background: #fff;
  color: #4bc3ee;
  font: 700 22px/26px "Liberation Sans", sans-serif;
}
.zoom button + button { border-top: 1px solid #ccc; }
.credit {
  position: absolute;
  right: 0;
  bottom: 0;
  display: flex;
  gap: 10px;
  padding: 0 5px;
  background: rgba(255, 255, 255, .8);
  color: #444;
  font: 12px/17px Lato, "Open Sans", sans-serif;
}
.credit a {
  display: flex;
  align-items: center;
  gap: 4px;
  color: #2a83ad;
  text-decoration: none;
}
</style>
